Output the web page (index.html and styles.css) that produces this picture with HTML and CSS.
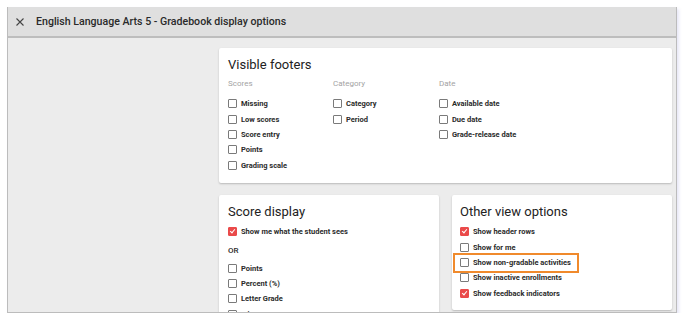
FILE: index.html
```html
<!DOCTYPE html>
<html lang="en">
<head>
    <meta charset="UTF-8">
    <title>Gradebook display options</title>
    <link rel="stylesheet" href="styles.css">
</head>
<body>
    <div class="dialog">
        <header class="dialog-header">
            <svg class="close-icon" width="8" height="8" viewBox="0 0 8 8">
                <path d="M0.5 0.5 L7.5 7.5 M7.5 0.5 L0.5 7.5" stroke="#444" stroke-width="1.1" fill="none"/>
            </svg>
            <h1>English Language Arts 5 - Gradebook display options</h1>
        </header>

        <div class="dialog-body">
            <div class="cards">
                <section class="card card-wide">
                    <h2>Visible footers</h2>
                    <div class="columns">
                        <div class="column">
                            <div class="col-heading">Scores</div>
                            <ul class="options">
                                <li class="option"><span class="box"></span>Missing</li>
                                <li class="option"><span class="box"></span>Low scores</li>
                                <li class="option"><span class="box"></span>Score entry</li>
                                <li class="option"><span class="box"></span>Points</li>
                                <li class="option"><span class="box"></span>Grading scale</li>
                            </ul>
                        </div>
                        <div class="column">
                            <div class="col-heading">Category</div>
                            <ul class="options">
                                <li class="option"><span class="box"></span>Category</li>
                                <li class="option"><span class="box"></span>Period</li>
                            </ul>
                        </div>
                        <div class="column">
                            <div class="col-heading">Date</div>
                            <ul class="options">
                                <li class="option"><span class="box"></span>Available date</li>
                                <li class="option"><span class="box"></span>Due date</li>
                                <li class="option"><span class="box"></span>Grade-release date</li>
                            </ul>
                        </div>
                    </div>
                </section>

                <section class="card">
                    <h2>Score display</h2>
                    <ul class="options">
                        <li class="option"><span class="box checked"></span>Show me what the student sees</li>
                    </ul>
                    <div class="or">OR</div>
                    <ul class="options">
                        <li class="option"><span class="box"></span>Points</li>
                        <li class="option"><span class="box"></span>Percent (%)</li>
                        <li class="option"><span class="box"></span>Letter Grade</li>
                        <li class="option"><span class="box"></span>Minutes Spent</li>
                    </ul>
                </section>

                <section class="card card-other">
                    <h2>Other view options</h2>
                    <ul class="options">
                        <li class="option"><span class="box checked"></span>Show header rows</li>
                        <li class="option"><span class="box"></span>Show for me</li>
                        <li class="option highlight"><span class="box"></span>Show non-gradable activities</li>
                        <li class="option"><span class="box"></span>Show inactive enrollments</li>
                        <li class="option"><span class="box checked"></span>Show feedback indicators</li>
                    </ul>
                </section>
            </div>
        </div>
    </div>
</body>
</html>
```

FILE: styles.css
```css
:root {
    --text: #2b2b2b;
    --muted: #a3a3a3;
    --box-border: #7a7a7a;
    --checked: #ea4a4a;
    --highlight: #f08a2c;
}
body {
    margin: 0;
    background: #fff;
    font-family: Roboto, "Liberation Sans", sans-serif;
    color: var(--text);
}
.dialog {
    margin: 7px 0 0 7px;
    width: 668px;
    height: 305px;
    border: 1px solid #bcbcbc;
    border-top: none;
    box-shadow: 2px 2px 3px rgba(120, 120, 210, 0.18);
    display: flex;
    flex-direction: column;
    overflow: hidden;
}
.dialog-header {
    height: 29px;
    background: #dfdfdf;
    border-bottom: 2px solid #bdbdbd;
    display: flex;
    align-items: center;
    padding-left: 8px;
    flex-shrink: 0;
}
.close-icon {
    margin-right: 12px;
}
.dialog-header h1 {
    margin: 0;
    font-size: 10.6px;
    font-weight: 500;
    color: #2a2a2a;
}
.dialog-body {
    flex: 1;
    background: #ececec;
    padding: 10px 4px 0 211px;
    overflow: hidden;
}
.cards {
    display: grid;
    grid-template-columns: 220px 220px;
    column-gap: 13px;
    row-gap: 12px;
}
.card {
    background: #fff;
    border-radius: 2px;
    box-shadow: 0 1px 2px rgba(0, 0, 0, 0.22);
    padding: 8px 9px 9px 9px;
}
.card-wide {
    grid-column: 1 / 3;
    padding-bottom: 10px;
}
.card-other {
    padding-left: 8px;
    align-self: start;
}
.card h2 {
    margin: 0 0 4px 0;
    font-size: 13px;
    line-height: 17px;
    font-weight: 400;
    color: #222;
}
.columns {
    display: grid;
    grid-template-columns: 105px 106px auto;
}
.col-heading {
    font-size: 8px;
    line-height: 14px;
    color: var(--muted);
    margin-bottom: 5px;
}
.options {
    list-style: none;
    margin: 0;
    padding: 0;
}
.option {
    height: 15.4px;
    display: flex;
    align-items: center;
    font-size: 7.5px;
    font-weight: 700;
    color: var(--text);
    white-space: nowrap;
}
.box {
    width: 7px;
    height: 7px;
    border: 1px solid var(--box-border);
    border-radius: 1px;
    margin-right: 4px;
    flex-shrink: 0;
    position: relative;
}
.box.checked {
    background: var(--checked);
    border-color: var(--checked);
}
.box.checked::after {
    content: "";
    position: absolute;
    left: 2px;
    top: 0px;
    width: 2px;
    height: 4px;
    border-right: 1px solid #fff;
    border-bottom: 1px solid #fff;
    transform: rotate(40deg);
}
.or {
    font-size: 8px;
    font-weight: 500;
    line-height: 14px;
    margin: 5px 0 2px 0;
}
.highlight {
    position: relative;
    width: fit-content;
}
.highlight::after {
    content: "";
    position: absolute;
    left: -7px;
    right: -8px;
    top: -2px;
    bottom: -3px;
    border: 2px solid var(--highlight);
}
```
